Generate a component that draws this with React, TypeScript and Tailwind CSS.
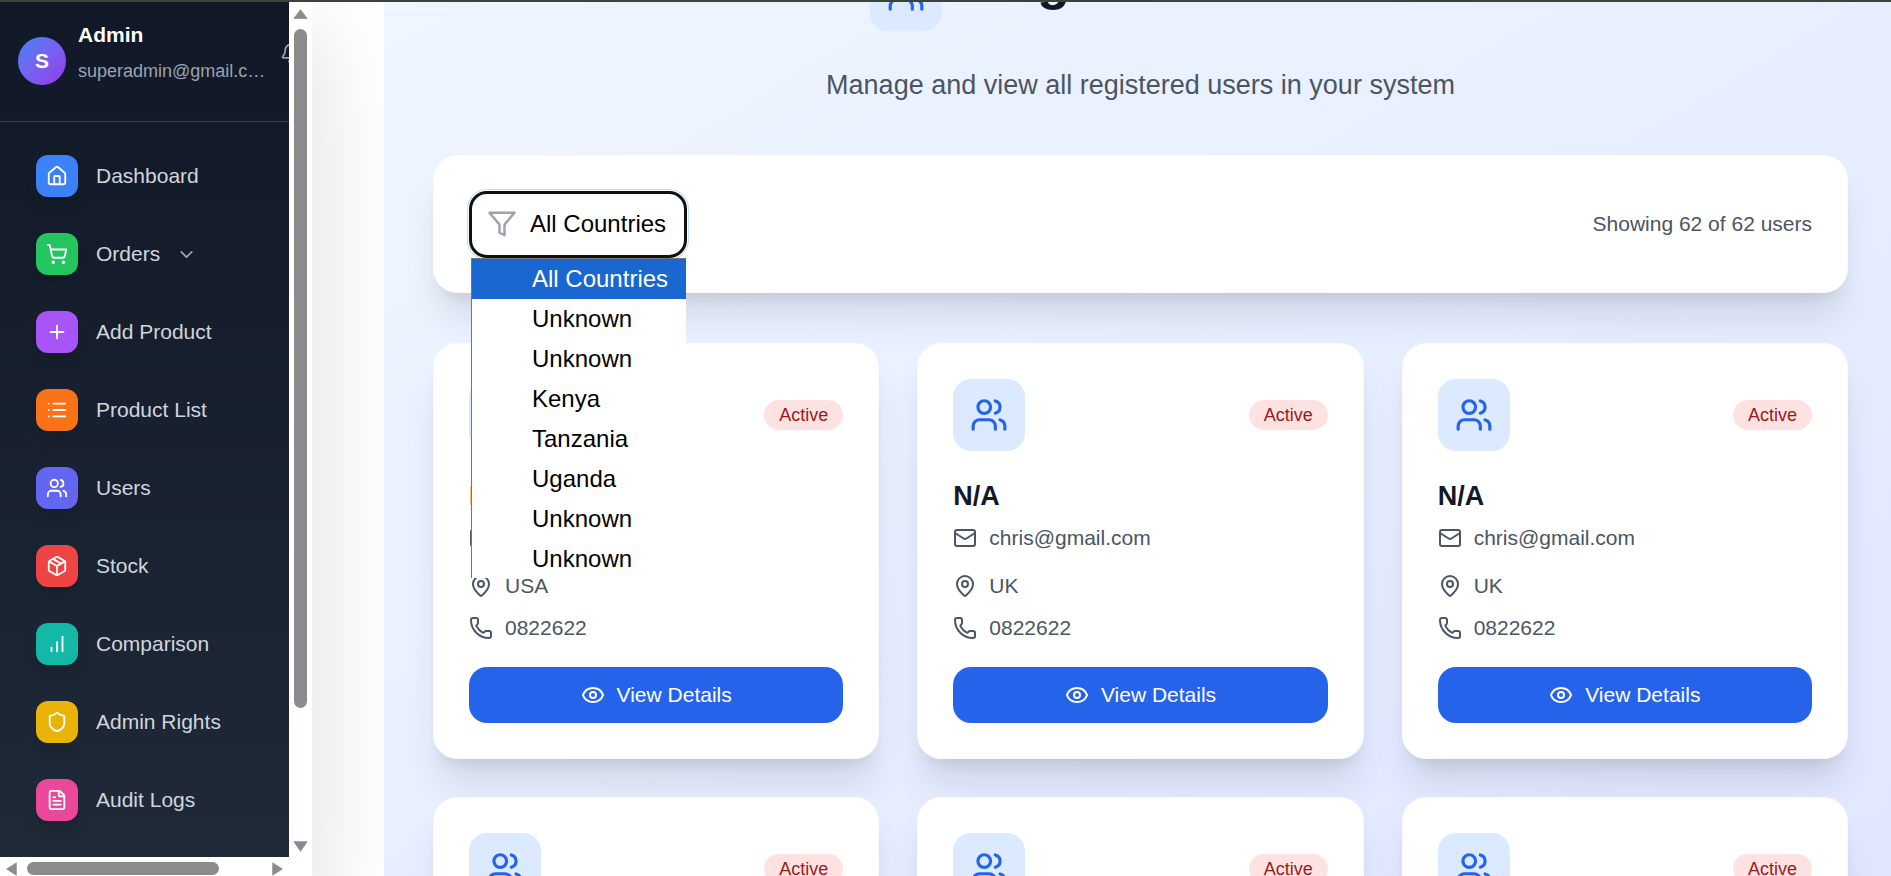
import React from 'react';
import {
  Bell,
  ChevronDown,
  Eye,
  FileText,
  Home,
  List,
  Mail,
  MapPin,
  Package,
  Phone,
  Plus,
  Shield,
  ShoppingCart,
  Users,
} from 'lucide-react';

const BarsIcon = ({ className }: { className?: string }) => (
  <svg viewBox="0 0 24 24" fill="none" stroke="currentColor" strokeWidth="2" strokeLinecap="round" strokeLinejoin="round" className={className}>
    <path d="M12 20V10" />
    <path d="M18 20V4" />
    <path d="M6 20v-4" />
  </svg>
);

const navItems = [
  { label: 'Dashboard', icon: Home, color: 'bg-[#3b82f6]' },
  { label: 'Orders', icon: ShoppingCart, color: 'bg-[#22c55e]', hasMenu: true },
  { label: 'Add Product', icon: Plus, color: 'bg-[#a855f7]' },
  { label: 'Product List', icon: List, color: 'bg-[#f97316]' },
  { label: 'Users', icon: Users, color: 'bg-[#6366f1]' },
  { label: 'Stock', icon: Package, color: 'bg-[#ef4444]' },
  { label: 'Comparison', icon: BarsIcon, color: 'bg-[#14b8a6]' },
  { label: 'Admin Rights', icon: Shield, color: 'bg-[#eab308]' },
  { label: 'Audit Logs', icon: FileText, color: 'bg-[#ec4899]' },
];

const countries = ['All Countries', 'Unknown', 'Unknown', 'Kenya', 'Tanzania', 'Uganda', 'Unknown', 'Unknown'];

const users = [
  { email: 'admin@gmail.com', country: 'USA' },
  { email: 'chris@gmail.com', country: 'UK' },
  { email: 'chris@gmail.com', country: 'UK' },
  { email: 'chris@gmail.com', country: 'UK' },
  { email: 'chris@gmail.com', country: 'UK' },
  { email: 'chris@gmail.com', country: 'UK' },
];

const Triangle = ({ points, className }: { points: string; className: string }) => (
  <svg viewBox="0 0 16 16" preserveAspectRatio="none" className={className}>
    <polygon points={points} fill="#8b8b8b" stroke="#8b8b8b" strokeWidth="1" strokeLinejoin="round" />
  </svg>
);

const Sidebar = () => (
  <aside className="h-[855px] w-[289px] overflow-hidden bg-gradient-to-b from-[#111827] to-[#1f2937]">
    <div className="flex h-[120px] items-start border-b border-[#374151] pl-[18px] pt-[19px]">
      <div className="mt-[16px] flex h-[48px] w-[48px] shrink-0 items-center justify-center rounded-full bg-gradient-to-br from-[#3b82f6] to-[#9333ea] text-[21px] font-bold text-white">
        S
      </div>
      <div className="ml-[12px] w-[191px] shrink-0">
        <p className="text-[21px] font-semibold leading-[28px] text-white">Admin</p>
        <p className="mt-[9px] truncate text-[18px] leading-[27px] text-[#9ca3af]">superadmin@gmail.com</p>
      </div>
      <Bell className="ml-[11px] mt-[22px] h-[21px] w-[21px] shrink-0 text-[#9ca3af]" />
    </div>
    <nav className="flex flex-col gap-[36px] pl-[36px] pt-[33px]">
      {navItems.map((item) => (
        <div key={item.label} className="flex h-[42px] items-center">
          <div className={`flex h-[42px] w-[42px] items-center justify-center rounded-[12px] shadow-lg ${item.color}`}>
            <item.icon className="h-[22px] w-[22px] text-white" />
          </div>
          <span className="ml-[18px] text-[21px] text-[#d1d5db]">{item.label}</span>
          {item.hasMenu && <ChevronDown className="ml-[16px] h-[21px] w-[21px] text-[#9ca3af]" />}
        </div>
      ))}
    </nav>
  </aside>
);

const UserCard = ({ email, country }: { email: string; country: string }) => (
  <div className="h-[416px] rounded-[24px] border border-[#fbfbfc] bg-white p-[35px] shadow-[0_30px_37px_-7px_rgba(0,0,0,0.1),0_12px_15px_-9px_rgba(0,0,0,0.1)]">
    <div className="flex items-center justify-between">
      <div className="flex h-[72px] w-[72px] items-center justify-center rounded-[18px] bg-[#dbeafe]">
        <Users className="h-[38px] w-[38px] text-[#2563eb]" />
      </div>
      <span className="flex h-[30px] items-center rounded-full bg-[#fee2e2] px-[15px] text-[18px] text-[#991b1b]">Active</span>
    </div>
    <h3 className="mt-[24px] text-[27px] font-bold leading-[42px] text-[#111827]">N/A</h3>
    <div className="mt-[5px] flex h-[32px] items-center gap-[12px] text-[21px] text-[#4b5563]">
      <Mail className="h-[24px] w-[24px]" />
      <span>{email}</span>
    </div>
    <div className="mt-[16px] flex h-[32px] items-center gap-[12px] text-[21px] text-[#4b5563]">
      <MapPin className="h-[24px] w-[24px]" />
      <span>{country}</span>
    </div>
    <div className="mt-[10px] flex h-[32px] items-center gap-[12px] text-[21px] text-[#4b5563]">
      <Phone className="h-[24px] w-[24px]" />
      <span>0822622</span>
    </div>
    <button className="mt-[23px] flex h-[56px] w-full items-center justify-center gap-[12px] rounded-[18px] bg-[#2563eb] text-[21px] text-white">
      <Eye className="h-[24px] w-[24px]" />
      View Details
    </button>
  </div>
);

const CountryFilter = () => (
  <div className="relative w-[218px]">
    <div className="flex h-[67px] items-center gap-[13px] rounded-[18px] border-[3px] border-[#111] bg-white pl-[15px] text-[24px] text-black shadow-[0_0_0_1px_#fff,0_0_0_2px_#bfdbfe]">
      <svg viewBox="0 0 24 24" fill="none" stroke="currentColor" strokeWidth="2" strokeLinejoin="round" className="h-[30px] w-[30px] shrink-0 text-[#9ca3af]">
        <polygon points="22 3 2 3 10 12.46 10 19 14 21 14 12.46 22 3" />
      </svg>
      All Countries
    </div>
    <div className="absolute left-[2px] top-[67px] z-20 h-[320px] w-[215px] border-l border-t border-[#767676] bg-white text-[24px] text-black">
      {countries.map((country, i) => (
        <div key={i} className={`flex h-[40px] items-center pl-[60px] ${i === 0 ? 'bg-[#1a67d2] text-white' : ''}`}>
          {country}
        </div>
      ))}
    </div>
  </div>
);

export default function App() {
  return (
    <div className="flex h-screen flex-col overflow-hidden bg-white font-['Liberation_Sans',Arial,sans-serif]">
      <div className="h-[2px] shrink-0 bg-[#3a443c]" />
      <div className="flex min-h-0 flex-1">
        <div className="flex w-[312px] shrink-0">
          <div className="w-[289px]">
            <Sidebar />
            <div className="flex h-[19px] items-start pl-[6px] pt-[5px]">
              <Triangle points="15,1 15,15 1,8" className="h-[14px] w-[11px]" />
              <div className="ml-[10px] h-[13px] w-[192px] rounded-full bg-[#8b8b8b]" />
              <Triangle points="1,1 1,15 15,8" className="ml-auto mr-[6px] h-[14px] w-[11px]" />
            </div>
          </div>
          <div className="flex w-[23px] flex-col items-center">
            <Triangle points="8,1 15,15 1,15" className="mt-[7px] h-[10px] w-[15px]" />
            <div className="mt-[10px] h-[679px] w-[13px] rounded-full bg-[#8b8b8b]" />
            <Triangle points="1,1 15,1 8,15" className="mb-[24px] mt-auto h-[11px] w-[15px]" />
          </div>
        </div>
        <div className="w-[72px] shrink-0 overflow-hidden bg-white">
          <div className="-ml-[100px] mt-[30px] h-[900px] w-[100px] shadow-[0_0_100px_rgba(0,0,0,0.14)]" />
        </div>
        <main className="min-w-0 flex-1 overflow-hidden bg-gradient-to-br from-[#eff6ff] to-[#e0e7ff] pl-[49px] pr-[43px]">
          <div className="-mt-[43px]">
            <div className="flex h-[72px] items-center justify-center">
              <div className="flex h-[72px] w-[72px] shrink-0 items-center justify-center rounded-[18px] bg-[#dbeafe]">
                <Users className="h-[38px] w-[38px] text-[#2563eb]" />
              </div>
              <h1 className="mb-[30px] ml-[26px] w-[443px] whitespace-nowrap text-[54px] font-bold leading-[60px] text-[#111827]">Registered Users</h1>
            </div>
            <p className="mt-[33px] text-center text-[27px] leading-[42px] text-[#4b5563]">
              Manage and view all registered users in your system
            </p>
            <div className="mt-[49px] flex h-[138px] items-center justify-between rounded-[24px] border border-[#fbfbfc] bg-white pl-[35px] pr-[35px] shadow-[0_30px_37px_-7px_rgba(0,0,0,0.1),0_12px_15px_-9px_rgba(0,0,0,0.1)]">
              <CountryFilter />
              <span className="text-[21px] text-[#4b5563]">Showing 62 of 62 users</span>
            </div>
            <div className="mt-[50px] grid grid-cols-3 gap-[38px]">
              {users.map((user, i) => (
                <UserCard key={i} email={user.email} country={user.country} />
              ))}
            </div>
          </div>
        </main>
      </div>
    </div>
  );
}
